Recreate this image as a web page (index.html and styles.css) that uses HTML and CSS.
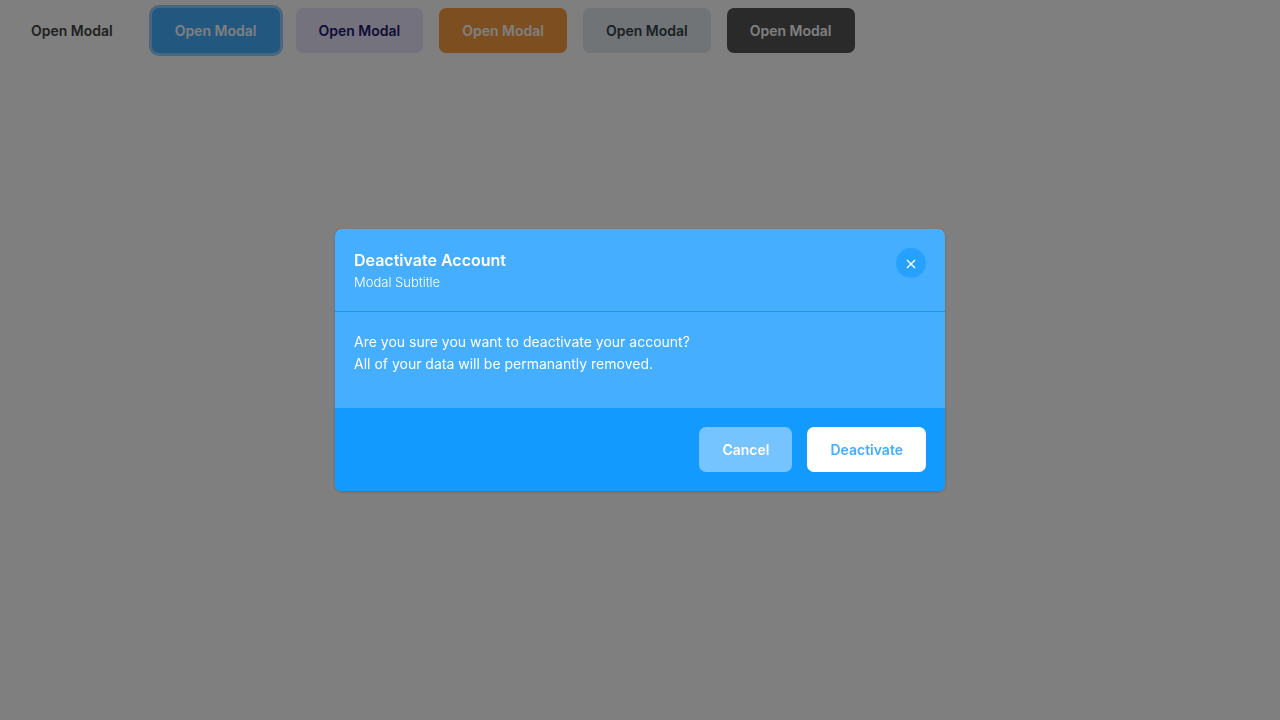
FILE: index.html
```html
<!DOCTYPE html>
<html lang="en">
<head>
<meta charset="utf-8">
<title>Modal</title>
<link rel="stylesheet" href="styles.css">
</head>
<body>
<main class="toolbar">
  <button class="btn btn-default" type="button">Open Modal</button>
  <button class="btn btn-primary is-focused" type="button">Open Modal</button>
  <button class="btn btn-purple" type="button">Open Modal</button>
  <button class="btn btn-orange" type="button">Open Modal</button>
  <button class="btn btn-light" type="button">Open Modal</button>
  <button class="btn btn-dark" type="button">Open Modal</button>
</main>
<div class="overlay">
  <section class="modal" role="dialog" aria-modal="true" aria-labelledby="modal-title">
    <header class="modal-header">
      <div>
        <h2 class="modal-title" id="modal-title">Deactivate Account</h2>
        <p class="modal-subtitle">Modal Subtitle</p>
      </div>
      <button class="modal-close" type="button" aria-label="Close">
        <svg class="modal-close-icon" viewBox="0 0 10 10" aria-hidden="true"><path d="M1 2L9 10M9 2L1 10"/></svg>
      </button>
    </header>
    <div class="modal-body">
      <p>Are you sure you want to deactivate your account?<br>All of your data will be permanantly removed.</p>
    </div>
    <footer class="modal-footer">
      <button class="btn btn-cancel" type="button">Cancel</button>
      <button class="btn btn-confirm" type="button">Deactivate</button>
    </footer>
  </section>
</div>
</body>
</html>
```

FILE: styles.css
```css
* {
  box-sizing: border-box;
}

body {
  margin: 0;
  min-height: 100vh;
  background: #fff;
  font-family: Inter, "Liberation Sans", sans-serif;
  font-size: 14px;
}

.toolbar {
  display: flex;
  flex-wrap: wrap;
  gap: 16px;
  padding: 8px;
}

.btn {
  height: 45px;
  padding: 0 23px;
  border: 0;
  border-radius: 7px;
  font: 600 14px/22px Inter, "Liberation Sans", sans-serif;
  white-space: nowrap;
  cursor: pointer;
}

.btn-default { background: transparent; color: #424242; }
.btn-primary { background: #45aeff; color: #fff; }
.btn-purple { background: #e6e4fa; color: #1f1670; }
.btn-orange { background: #fa9d41; color: #fff; }
.btn-light { background: #e0e8ee; color: #36424a; }
.btn-dark { background: #545454; color: #fff; }
.is-focused { box-shadow: 0 0 0 3px #8fceff; }

.overlay {
  position: fixed;
  inset: 0;
  display: flex;
  align-items: center;
  justify-content: center;
  background: rgba(0, 0, 0, 0.5);
}

.modal {
  width: 610px;
  max-width: 100%;
  overflow: hidden;
  border-radius: 7px;
  background: #45aeff;
  color: #fff;
  box-shadow: 0 1px 3px rgba(0, 0, 0, 0.2);
}

.modal-header {
  display: flex;
  align-items: flex-start;
  justify-content: space-between;
  padding: 19px;
  border-bottom: 1px solid #129aff;
}

.modal-title,
.modal-subtitle,
.modal-body p {
  margin: 0;
}

.modal-title {
  font-size: 16px;
  font-weight: 600;
  line-height: 24px;
}

.modal-subtitle {
  font-size: 13px;
  font-weight: 300;
  line-height: 20px;
}

.modal-close {
  display: flex;
  align-items: center;
  justify-content: center;
  width: 30px;
  height: 30px;
  padding: 0;
  border: 0;
  border-radius: 50%;
  background: #26a1ff;
  cursor: pointer;
}

.modal-close-icon {
  width: 10px;
  height: 10px;
  overflow: visible;
  fill: none;
  stroke: #fff;
  stroke-width: 1.4;
}

.modal-body {
  padding: 19px 19px 33px;
  font-weight: 400;
  line-height: 22px;
}

.modal-footer {
  display: flex;
  justify-content: flex-end;
  gap: 15px;
  padding: 19px;
  background: #129aff;
}

.btn-cancel { background: #75c3ff; color: #fff; }
.btn-confirm { background: #fff; color: #45aeff; }
```
